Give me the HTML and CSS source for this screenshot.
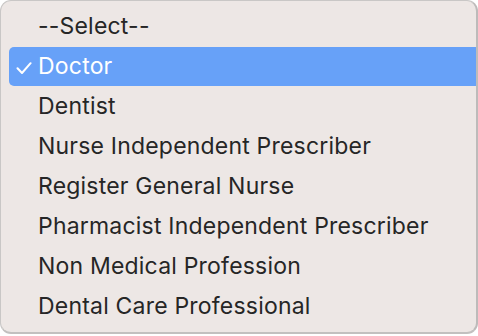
FILE: index.html
```html
<!DOCTYPE html>
<html>
<head>
<meta charset="utf-8">
<link rel="stylesheet" href="styles.css">
</head>
<body>
<div class="menu">
  <div class="item"><span class="label">--Select--</span></div>
  <div class="item selected"><svg class="check" width="16" height="13" viewBox="0 0 16 13"><path d="M1.5 6.2 L6 11 L14.6 1.2" fill="none" stroke="#ffffff" stroke-width="2" stroke-linecap="round" stroke-linejoin="round"/></svg><span class="label">Doctor</span></div>
  <div class="item"><span class="label">Dentist</span></div>
  <div class="item"><span class="label">Nurse Independent Prescriber</span></div>
  <div class="item"><span class="label">Register General Nurse</span></div>
  <div class="item"><span class="label">Pharmacist Independent Prescriber</span></div>
  <div class="item"><span class="label">Non Medical Profession</span></div>
  <div class="item"><span class="label">Dental Care Professional</span></div>
</div>
</body>
</html>
```
FILE: styles.css
```css
html, body {
  margin: 0;
  padding: 0;
  background: #ffffff;
}
body {
  width: 478px;
  height: 336px;
  overflow: hidden;
}
.menu {
  box-sizing: border-box;
  width: 478px;
  height: 334px;
  background: #ede7e5;
  border: 1px solid #c9c7c6;
  border-right: 2px solid #bdbbba;
  border-bottom: 2px solid #c2c0bf;
  border-radius: 11px;
  padding: 6px 0 0 8px;
  font-family: Inter, "Liberation Sans", sans-serif;
  font-size: 23px;
  letter-spacing: 0.2px;
  color: #262626;
}
.item {
  position: relative;
  height: 40px;
  display: flex;
  align-items: center;
  padding-left: 29px;
}
.label {
  position: relative;
  top: -1px;
}
.selected {
  background: #67a1f8;
  color: #ffffff;
  border-radius: 5px 0 0 5px;
  height: 39px;
  margin-bottom: 1px;
}
.check {
  position: absolute;
  left: 7px;
  top: 15px;
}
```
